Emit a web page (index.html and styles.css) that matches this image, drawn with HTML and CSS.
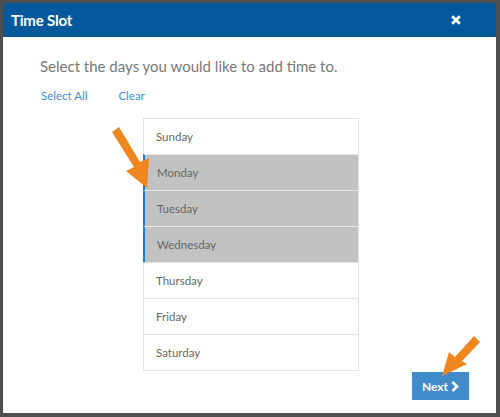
FILE: index.html
```html
<!DOCTYPE html>
<html>
<head>
<meta charset="utf-8">
<link rel="stylesheet" href="styles.css">
</head>
<body>
<div class="modal">
  <div class="modal-header">
    <span class="title">Time Slot</span>
    <svg class="close" width="10" height="10" viewBox="0 0 10 10"><path d="M1.2 1.2 L8.8 8.8 M8.8 1.2 L1.2 8.8" stroke="#fff" stroke-width="2.8"/></svg>
  </div>
  <div class="modal-body">
    <p class="lead">Select the days you would like to add time to.</p>
    <div class="links">
      <a class="link">Select All</a>
      <a class="link">Clear</a>
    </div>
    <ul class="days">
      <li>Sunday</li>
      <li class="sel">Monday</li>
      <li class="sel">Tuesday</li>
      <li class="sel">Wednesday</li>
      <li>Thursday</li>
      <li>Friday</li>
      <li>Saturday</li>
    </ul>
    <div class="footer">
      <button class="next">Next <svg width="8" height="11" viewBox="0 0 8 11"><path d="M1.5 1 L6 5.5 L1.5 10" fill="none" stroke="#fff" stroke-width="2.6"/></svg></button>
    </div>
  </div>
</div>
<svg class="arrows" width="500" height="417" viewBox="0 0 500 417">
  <polygon fill="#f0861e" points="112,132 119,127 140,162 149,158 147,188 126,171 134,167"/>
  <polygon fill="#f0861e" points="474,336 480,342 462,361 467,364 442,376 449,352 455,357"/>
</svg>
</body>
</html>
```
FILE: styles.css
```css
html, body {
  margin: 0;
  padding: 0;
}
body {
  width: 500px;
  height: 417px;
  background: #4e4e4e;
  font-family: Lato, "Open Sans", sans-serif;
  position: relative;
  overflow: hidden;
  padding: 3px 4px 4px 3px;
  box-sizing: border-box;
}
.modal {
  width: 493px;
  height: 410px;
  background: #fff;
  display: flex;
  flex-direction: column;
}
.modal-header {
  height: 34px;
  background: #03599b;
  display: flex;
  align-items: center;
  justify-content: space-between;
  padding: 0 35px 0 8px;
  color: #fff;
}
.title {
  font-weight: bold;
  font-size: 15px;
  letter-spacing: -0.2px;
}
.close {
  display: block;
}
.modal-body {
  flex: 1;
  display: flex;
  flex-direction: column;
  padding: 0 0 0 37px;
}
.lead {
  margin: 19px 0 0 0;
  font-size: 15px;
  color: #777;
  line-height: 20px;
}
.links {
  margin-top: 13px;
  display: flex;
  gap: 31px;
  padding-left: 1px;
}
.link {
  font-size: 11.5px;
  color: #3b8fd6;
  line-height: 14px;
}
.days {
  list-style: none;
  margin: 15px 0 0 103px;
  padding: 0;
  width: 214px;
  border: 1px solid #e2e2e2;
}
.days li {
  height: 36px;
  box-sizing: border-box;
  border-top: 1px solid #e2e2e2;
  display: flex;
  align-items: center;
  padding-left: 12px;
  font-size: 11.5px;
  color: #666;
}
.days li:first-child {
  border-top: none;
  height: 35px;
}
.days li.sel {
  background: #c2c2c2;
  border-left: 2px solid #1f7bc1;
  margin-left: -1px;
  padding-left: 12px;
  border-top-color: #e6e6e6;
}
.footer {
  display: flex;
  justify-content: flex-end;
  padding-right: 27px;
  margin-top: 1px;
}
.next {
  width: 57px;
  height: 28px;
  border: none;
  background: #428bca;
  color: #fff;
  font-family: Lato, sans-serif;
  font-weight: bold;
  font-size: 12px;
  display: flex;
  align-items: center;
  justify-content: center;
  gap: 3px;
  padding: 0;
}
.arrows {
  position: absolute;
  left: 0;
  top: 0;
}
```
